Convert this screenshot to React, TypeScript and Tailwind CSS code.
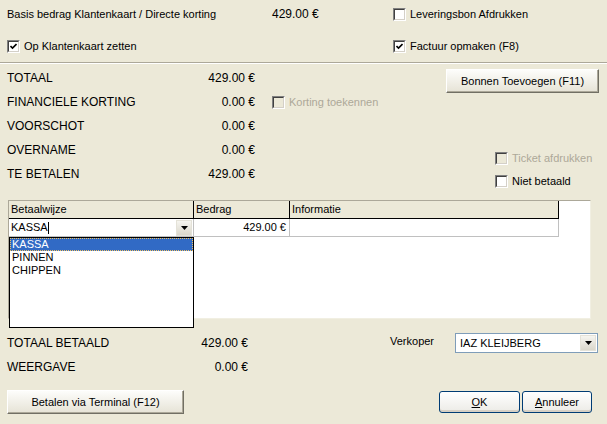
import React from 'react';

const font = { fontFamily: '"Liberation Sans", Arial, sans-serif' };

interface CheckProps {
  checked?: boolean;
  disabled?: boolean;
  label: string;
}

// klassieke windows checkbox, 13x13
const Check = ({ checked, disabled, label }: CheckProps) => (
  <div className='flex items-center h-[16px]'>
    <div className={`w-[13px] h-[13px] border border-t-[#808080] border-l-[#808080] border-r-white border-b-white flex ${disabled ? 'bg-[#ECE9D8]' : 'bg-white'}`}>
      <div className='flex-1 border border-t-[#404040] border-l-[#404040] border-r-[#D4D0C8] border-b-[#D4D0C8] flex items-center justify-center'>
        {checked && (
          <svg width='7' height='7' viewBox='0 0 7 7'>
            <path d='M0.5 3 L2.5 5 L6.5 1' stroke='#000' strokeWidth='1.6' fill='none' />
          </svg>
        )}
      </div>
    </div>
    <span className={`ml-[4px] text-[11px] ${disabled ? 'text-[#ACA899]' : 'text-black'}`}>{label}</span>
  </div>
);

const Arrow = () => (
  <div className='w-[16px] h-[16px] bg-gradient-to-b from-[#F6F5F0] to-[#DAD7CB] border border-[#E4E2D8] flex items-center justify-center'>
    <svg width='7' height='4' viewBox='0 0 7 4'>
      <path d='M0 0 H7 L3.5 4 Z' fill='#000' />
    </svg>
  </div>
);

interface RowProps {
  label: string;
  value: string;
  width?: string;
}

const AmountRow = ({ label, value, width = 'w-[248px]' }: RowProps) => (
  <div className={`flex items-center h-[16px] text-[12px] ${width}`}>
    <span className='flex-1'>{label}</span>
    <span>{value}</span>
  </div>
);

const App = () => {
  return (
    <div className='w-[607px] h-[424px] bg-[#ECE9D8] text-black overflow-hidden' style={font}>
      {/* bovenste deel */}
      <div className='pl-[7px] pt-[6px]'>
        <div className='flex items-center h-[16px] text-[11px]'>
          <span className='w-[265px]'>Basis bedrag Klantenkaart / Directe korting</span>
          <span className='w-[121px] text-[12px]'>429.00 €</span>
          <Check label='Leveringsbon Afdrukken' />
        </div>
        <div className='flex items-center h-[16px] mt-[16px]'>
          <div className='w-[386px]'>
            <Check checked label='Op Klantenkaart zetten' />
          </div>
          <Check checked label='Factuur opmaken (F8)' />
        </div>
      </div>
      <div className='mt-[8px] border-t border-t-[#ACA899] border-b border-b-white' />

      {/* bedragen */}
      <div className='flex pl-[7px]'>
        <div className='w-[430px] flex flex-col gap-[8px] mt-[6px]'>
          <AmountRow label='TOTAAL' value='429.00 €' />
          <div className='flex items-center'>
            <AmountRow label='FINANCIELE KORTING' value='0.00 €' />
            <div className='ml-[17px]'>
              <Check disabled label='Korting toekennen' />
            </div>
          </div>
          <AmountRow label='VOORSCHOT' value='0.00 €' />
          <AmountRow label='OVERNAME' value='0.00 €' />
          <AmountRow label='TE BETALEN' value='429.00 €' />
        </div>
        <div className='ml-[9px] flex flex-col mt-[5px]'>
          <button className='w-[153px] h-[24px] text-[11px] bg-gradient-to-b from-[#FDFDFB] to-[#E6E3D6] border border-t-white border-l-white border-r-[#716F64] border-b-[#716F64] shadow-[inset_-1px_-1px_0_#ACA899]'>
            Bonnen Toevoegen (F11)
          </button>
          <div className='ml-[49px] mt-[57px]'>
            <Check disabled label='Ticket afdrukken' />
          </div>
          <div className='ml-[49px] mt-[7px]'>
            <Check label='Niet betaald' />
          </div>
        </div>
      </div>

      {/* betaalwijze grid */}
      <div className='relative ml-[8px] mt-[11px] w-[583px] h-[119px] bg-white border border-t-[#ACA899] border-l-[#ACA899] border-r-[#F1EFE2] border-b-[#F1EFE2] text-[11px]'>
        <div className='flex h-[18px] w-[550px] border-b border-b-black border-r border-r-black bg-[#ECE9D8]'>
          <div className='w-[185px] pl-[2px] border-r border-r-black flex items-center'>Betaalwijze</div>
          <div className='w-[96px] pl-[2px] border-r border-r-black flex items-center'>Bedrag</div>
          <div className='flex-1 pl-[2px] flex items-center'>Informatie</div>
        </div>
        <div className='flex h-[18px] w-[550px] border-b border-b-[#C0C0C0] border-r border-r-[#C0C0C0]'>
          <div className='w-[185px] pl-[2px] pr-[1px] border-r border-r-[#C0C0C0] flex items-center'>
            <span className='flex-1 flex items-center'>
              KASSA<span className='w-px h-[12px] bg-black' />
            </span>
            <Arrow />
          </div>
          <div className='w-[96px] pr-[3px] border-r border-r-[#C0C0C0] flex items-center justify-end'>429.00 €</div>
          <div className='flex-1' />
        </div>

        {/* open lijst */}
        <div className='absolute left-0 top-[36px] w-[185px] h-[91px] bg-white border border-black z-10'>
          <div className='h-[13px] bg-[#316AC5] text-white pl-[2px] leading-[13px] outline-1 outline-dotted outline-[#F0C060] -outline-offset-1'>KASSA</div>
          <div className='h-[13px] pl-[2px] leading-[13px]'>PINNEN</div>
          <div className='h-[13px] pl-[2px] leading-[13px]'>CHIPPEN</div>
        </div>
      </div>

      {/* onderste deel */}
      <div className='pl-[7px] mt-[14px]'>
        <div className='flex items-center h-[20px]'>
          <AmountRow label='TOTAAL BETAALD' value='429.00 €' width='w-[241px]' />
          <span className='ml-[142px] w-[65px] text-[11px] mb-[4px]'>Verkoper</span>
          <div className='w-[143px] h-[20px] bg-white border border-[#7F9DB9] flex items-center pl-[4px] pr-[1px] text-[11px]'>
            <span className='flex-1'>IAZ KLEIJBERG</span>
            <Arrow />
          </div>
        </div>
        <div className='mt-[6px]'>
          <AmountRow label='WEERGAVE' value='0.00 €' width='w-[241px]' />
        </div>
        <div className='flex items-start mt-[15px] text-[11px]'>
          <button className='w-[177px] h-[24px] bg-gradient-to-b from-[#FDFDFB] to-[#E6E3D6] border border-t-white border-l-white border-r-[#716F64] border-b-[#716F64] shadow-[inset_-1px_-1px_0_#ACA899]'>
            Betalen via Terminal (F12)
          </button>
          <button className='ml-[255px] mt-[1px] w-[81px] h-[22px] rounded-[3px] border border-[#003C74] bg-gradient-to-b from-white to-[#ECEBE6] shadow-[inset_0_-2px_0_#D6D0C5]'>
            <span className='underline'>O</span>K
          </button>
          <button className='ml-[2px] mt-[1px] w-[70px] h-[22px] rounded-[3px] border border-[#003C74] bg-gradient-to-b from-white to-[#ECEBE6] shadow-[inset_0_-2px_0_#D6D0C5]'>
            <span className='underline'>A</span>nnuleer
          </button>
        </div>
      </div>
    </div>
  );
};

export default App;
